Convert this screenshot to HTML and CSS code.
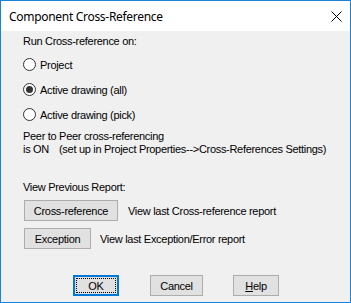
FILE: index.html
```html
<!DOCTYPE html>
<html lang="en">
<head>
  <meta charset="UTF-8">
  <title>Component Cross-Reference</title>
  <link rel="stylesheet" href="styles.css">
</head>
<body>

  <div class="window">
    <div class="titlebar">
      <span class="title">Component Cross-Reference</span>
      <svg class="close" width="11" height="11" viewBox="0 0 11 11">
        <path d="M0.5 0.5 L10.5 10.5 M10.5 0.5 L0.5 10.5" stroke="#000" stroke-width="1" fill="none"/>
      </svg>
    </div>

    <div class="client">
      <div class="line">Run Cross-reference on:</div>

      <div class="radios">
        <label class="radio"><span class="dot"></span>Project</label>
        <label class="radio"><span class="dot checked"></span>Active drawing (all)</label>
        <label class="radio"><span class="dot"></span>Active drawing (pick)</label>
      </div>

      <div class="peer">
        <div class="line">Peer to Peer cross-referencing</div>
        <div class="line"><span class="is-on">is ON</span>(set up in Project Properties--&gt;Cross-References Settings)</div>
      </div>

      <div class="line report-head">View Previous Report:</div>

      <div class="report-row">
        <button class="btn btn-xref">Cross-reference</button>
        <span>View last Cross-reference report</span>
      </div>
      <div class="report-row second">
        <button class="btn btn-exc">Exception</button>
        <span>View last Exception/Error report</span>
      </div>

      <!-- dialog buttons -->
      <div class="actions">
        <button class="btn btn-ok"><span class="focus">OK</span></button>
        <button class="btn btn-cancel">Cancel</button>
        <button class="btn btn-help"><u>H</u>elp</button>
      </div>
    </div>
  </div>

</body>
</html>
```

FILE: styles.css
```css
* {
  box-sizing: border-box;
}

body {
  margin: 0;
  padding: 0;
  background-color: #f0f0f0;
}

.window {
  width: 351px;
  height: 303px;
  border: 1px solid #1883d7;
  display: flex;
  flex-direction: column;
  background-color: #f0f0f0;
}

.titlebar {
  height: 30px;
  background: #ffffff;
  display: flex;
  align-items: center;
  justify-content: space-between;
  padding: 0 8px 0 8px;
}

.title {
  font-family: "Noto Sans", sans-serif;
  font-size: 12px;
  letter-spacing: -0.3px;
  color: #000;
}

.close {
  display: block;
}

.client {
  flex: 1;
  padding: 4px 0 0 22px;
  font-family: "Liberation Sans", Arial, sans-serif;
  font-size: 11px;
  letter-spacing: -0.3px;
  color: #000;
}

.line {
  line-height: 13px;
  white-space: nowrap;
}

.radios {
  margin-top: 4px;
}

.radio {
  display: flex;
  align-items: center;
  height: 25px;
  gap: 4px;
}

.dot {
  width: 13px;
  height: 13px;
  border: 1px solid #333;
  border-radius: 50%;
  background: #fff;
  display: flex;
  align-items: center;
  justify-content: center;
}

.dot.checked::after {
  content: "";
  width: 7px;
  height: 7px;
  border-radius: 50%;
  background: #333;
}

.peer {
  margin-top: 3px;
}

.is-on {
  display: inline-block;
  width: 36px;
}

.report-head {
  margin-top: 25px;
}

.report-row {
  display: flex;
  align-items: center;
  margin-top: 6px;
  padding-left: 1px;
  gap: 10px;
}

.report-row.second {
  margin-top: 7px;
  gap: 9px;
}

.btn {
  font-family: "Liberation Sans", Arial, sans-serif;
  font-size: 11px;
  letter-spacing: -0.3px;
  color: #000;
  background: #e1e1e1;
  border: 1px solid #adadad;
  height: 21px;
  padding: 0;
  margin: 0;
}

.btn-xref {
  width: 94px;
}

.btn-exc {
  width: 67px;
}

.actions {
  display: flex;
  margin-top: 26px;
  padding-left: 50px;
}

.btn-ok {
  width: 46px;
  border: 2px solid #0078d7;
  padding: 1px;
}

.focus {
  display: flex;
  align-items: center;
  justify-content: center;
  width: 100%;
  height: 100%;
  border: 1px dotted #000;
}

.btn-cancel {
  width: 53px;
  margin-left: 31px;
}

.btn-help {
  width: 46px;
  margin-left: 30px;
}
```
